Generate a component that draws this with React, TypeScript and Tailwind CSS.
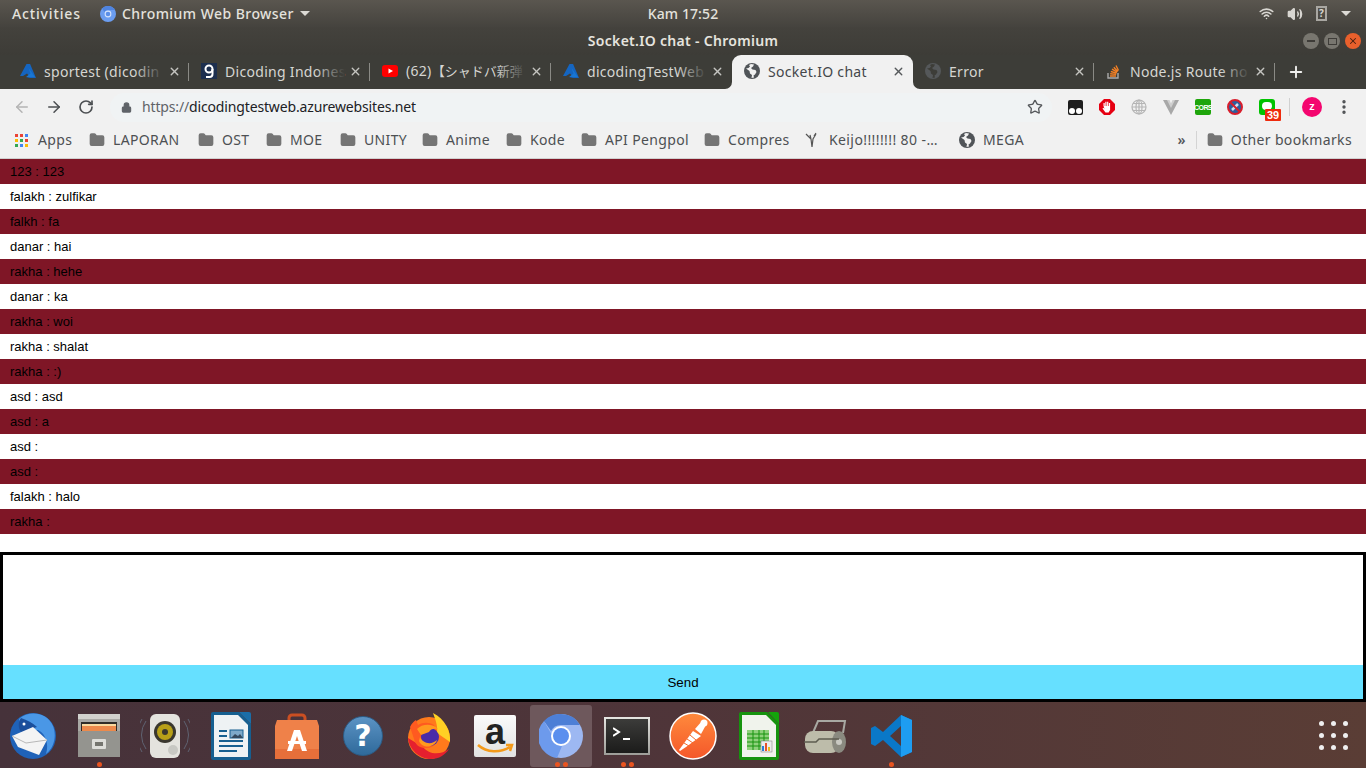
import React from 'react';
import { ArrowLeft, ArrowRight, RotateCw, Lock, Star, X, Plus, MoreVertical, Wifi, Volume2, Folder } from 'lucide-react';

const uiFont = '[font-family:"Noto_Sans","Open_Sans","Noto_Sans_CJK_JP",sans-serif]';

const messages = [
  '123 : 123', 'falakh : zulfikar', 'falkh : fa', 'danar : hai', 'rakha : hehe',
  'danar : ka', 'rakha : woi', 'rakha : shalat', 'rakha : :)', 'asd : asd',
  'asd : a', 'asd :', 'asd :', 'falakh : halo', 'rakha :',
];

const AzureIcon = () => (
  <svg width="16" height="14" viewBox="0 0 16 14"><path d="M6.500 0h3.600L16 14H6l4-1-3-3.500L3 12H0z" fill="#1565c0" /><path d="M8.500 4l2 5.500L6 13h9z" fill="#1976d2" /></svg>
);
const DicodingIcon = () => (
  <div className="w-4 h-[16px] bg-[#1d2f4f] flex items-center justify-center">
    <svg width="10" height="14" viewBox="0 0 10 14" fill="none" stroke="#fff" strokeWidth="2"><circle cx="5" cy="5" r="3.500" /><path d="M8.500 5v5a3 3 0 0 1-3 3H2" /></svg>
  </div>
);
const YoutubeIcon = () => (
  <svg width="16" height="12" viewBox="0 0 16 12"><rect width="16" height="12" rx="3" fill="#f00" /><path d="M6.500 3.500v5L11 6z" fill="#fff" /></svg>
);
const StackIcon = () => (
  <svg width="14" height="16" viewBox="0 0 14 16" fill="none" strokeWidth="1.400"><path d="M1 10v5h10v-5" stroke="#aaa" /><path d="M3 13h6M3.200 10.800l6 .6M3.800 8.500l5.800 1.600M5 6.200l5.200 3M6.800 4.300l4 4.300M9 2.500l2.500 5" stroke="#f48024" /></svg>
);
// chrome's default favicon: solid globe with light continents
const GlobeSolid = ({ color = '#505458', land = '#f1f1f1' }: { color?: string; land?: string }) => (
  <svg width="16" height="16" viewBox="0 0 16 16" className="shrink-0">
    <circle cx="8" cy="8" r="8" fill={color} />
    <path d="M2 5.500l2.500-.5L6 3.500 5 2 7 1l3 .5-1 2-2 1.500 1.500 1.500 3 .5 1 2-1.500 2.500-1.500 1 .5 2-2.500.5.500-3-2-1.500-.5-2.500z" fill={land} />
  </svg>
);

const tabs = [
  { title: 'sportest (dicodin', icon: <AzureIcon />, fade: true },
  { title: 'Dicoding Indones', icon: <DicodingIcon />, fade: true },
  { title: '(62)', rest: '【シャドバ新弾', icon: <YoutubeIcon />, fade: true },
  { title: 'dicodingTestWeb', icon: <AzureIcon />, fade: true },
  { title: 'Socket.IO chat', icon: <GlobeSolid />, active: true },
  { title: 'Error', icon: <GlobeSolid color="#55585a" land="#3d3d38" /> },
  { title: 'Node.js Route no', icon: <StackIcon />, fade: true },
];

const bookmarks = [
  { label: 'LAPORAN', w: 'w-[109px]' },
  { label: 'OST', w: 'w-[68px]' },
  { label: 'MOE', w: 'w-[74px]' },
  { label: 'UNITY', w: 'w-[82px]' },
  { label: 'Anime', w: 'w-[84px]' },
  { label: 'Kode', w: 'w-[75px]' },
  { label: 'API Pengpol', w: 'w-[123px]' },
  { label: 'Compres', w: 'w-[100px]' },
];

const FolderIcon = () => <Folder size={16} fill="#757575" stroke="#757575" className="shrink-0" />;

const AppsIcon = () => (
  <svg width="13" height="13" viewBox="0 0 13 13" className="shrink-0">
    {[0, 1, 2].map(r => [0, 1, 2].map(c => (
      <rect key={`${r}${c}`} x={c * 5} y={r * 5} width="3" height="3"
        fill={[['#ea4335', '#ea4335', '#4285f4'], ['#fbbc05', '#34a853', '#ea4335'], ['#34a853', '#4285f4', '#fbbc05']][r][c]} />
    )))}
  </svg>
);

const ChromiumSmall = () => (
  <svg width="16" height="16" viewBox="0 0 16 16"><circle cx="8" cy="8" r="8" fill="#6b9df0" /><path d="M8 0a8 8 0 0 1 7 4H8a4 4 0 0 0-3.500 2L2 2.500A8 8 0 0 1 8 0" fill="#4f84e0" /><circle cx="8" cy="8" r="3.400" fill="#d5e3fb" /><circle cx="8" cy="8" r="2.300" fill="#5b8fe8" /></svg>
);

const TopBar = () => (
  <div className={`h-[27px] bg-gradient-to-b from-[#5a564f] to-[#45433e] flex items-center text-[#e4e2dd] text-[14px] font-medium tracking-[0.45px] ${uiFont}`}>
    <div className="flex-1 flex items-center">
      <span className="ml-3 w-[68px] tracking-[0.85px]">Activities</span>
      <div className="ml-[20px] flex items-center gap-[6px]">
        <ChromiumSmall />
        <span>Chromium Web Browser</span>
        <span className="w-0 h-0 border-x-[5px] border-x-transparent border-t-[5px] border-t-[#dcdad5]" />
      </div>
    </div>
    <span className="tracking-[0.1px]">Kam 17:52</span>
    <div className="flex-1 flex items-center justify-end text-[#d8d6d1]">
      <Wifi size={15} strokeWidth={2.500} className="mr-[13px]" />
      <Volume2 size={16} strokeWidth={2} fill="currentColor" className="mr-[13px]" />
      <div className="w-[11px] h-[15px] border-2 border-[#a9a7a2] text-[10px] font-bold leading-[11px] text-center tracking-normal mr-[14px]">?</div>
      <span className="w-0 h-0 border-x-[5px] border-x-transparent border-t-[5px] border-t-[#dcdad5] mr-[15px]" />
    </div>
  </div>
);

const TitleBar = () => (
  <div className={`relative h-[28px] pb-[2px] bg-gradient-to-b from-[#44423d] to-[#3d3c37] flex items-center justify-center text-[#e6e4df] text-[14px] font-semibold tracking-[0.3px] ${uiFont}`}>
    <span>Socket.IO chat - Chromium</span>
    <div className="absolute right-[5px] top-[6px] flex gap-[5px]">
      <div className="w-[16px] h-[16px] rounded-full bg-[#78766f] flex items-center justify-center"><div className="w-[8px] h-[2px] bg-[#3e3c38]" /></div>
      <div className="w-[16px] h-[16px] rounded-full bg-[#78766f] flex items-center justify-center"><div className="w-[9px] h-[7px] border border-[#3e3c38]" /></div>
      <div className="w-[16px] h-[16px] rounded-full bg-[#e9602c] flex items-center justify-center"><X size={10} strokeWidth={2.500} className="text-[#4a2010]" /></div>
    </div>
  </div>
);

const TabStrip = () => (
  <div className={`h-[34px] bg-[#3d3d38] flex items-stretch pl-[8px] ${uiFont}`}>
    {tabs.map((t, i) => {
      const bg = t.active ? 'bg-[#f1f1f1] text-[#44474a] rounded-t-[9px]' : 'text-[#d6d6d2]';
      return (
        <div key={i} className={`relative w-[181px] h-full flex items-center shrink-0 pl-[12px] pb-[2px] text-[14px] ${bg}`}>
          {t.active && (
            <>
              <svg className="absolute -left-[7px] bottom-0" width="7" height="7" viewBox="0 0 7 7"><path d="M7 0v7H0a7 7 0 0 0 7-7" fill="#f1f1f1" /></svg>
              <svg className="absolute -right-[7px] bottom-0" width="7" height="7" viewBox="0 0 7 7"><path d="M0 0v7h7a7 7 0 0 1-7-7" fill="#f1f1f1" /></svg>
            </>
          )}
          <div className="w-[16px] flex justify-center shrink-0">{t.icon}</div>
          <div className="relative ml-[8px] w-[120px] whitespace-nowrap tracking-[0.3px]">
            {t.title}
            {t.rest && <span className="text-[13px] tracking-normal">{t.rest}</span>}
            {t.fade && <div className="absolute right-0 top-0 h-full w-[30px] bg-gradient-to-r from-transparent to-[#3d3d38]" />}
          </div>
          <X size={13} strokeWidth={2.500} className={`absolute right-[8px] ${t.active ? 'text-[#55585b]' : 'text-[#c5c5c1]'}`} />
          {!t.active && i !== 3 && <div className="absolute right-0 top-[8px] h-[18px] w-px bg-[#8a8a85]" />}
        </div>
      );
    })}
    <Plus size={18} strokeWidth={2.500} className="text-[#f0f0ee] ml-[14px] self-center -translate-x-[2px]" />
  </div>
);

const ExtSlot = ({ children }: { children: React.ReactNode }) => (
  <div className="relative w-[32px] h-[16px] flex items-center justify-center shrink-0">{children}</div>
);

const Toolbar = () => (
  <div className={`h-[36px] bg-[#f1f1f1] flex items-center text-[#5f6368] ${uiFont}`}>
    <ArrowLeft size={18} strokeWidth={2} className="ml-[13px] text-[#b4b4b4]" />
    <ArrowRight size={18} strokeWidth={2} className="ml-[14px] text-[#4c4f52]" />
    <RotateCw size={16} strokeWidth={2.500} className="ml-[15px] text-[#4c4f52]" />
    <div className="ml-[16px] w-[942px] h-[29px] rounded-full bg-[#f0f3f4] flex items-center pl-[11px] pr-[9px]">
      <Lock size={11} fill="#5f6368" strokeWidth={2.500} className="text-[#5f6368]" />
      <span className="ml-[10px] pb-[2px] text-[14px] tracking-[-0.15px] text-[#5f6368]">https://<span className="text-[#202124]">dicodingtestweb.azurewebsites.net</span></span>
      <Star size={16} strokeWidth={2} className="ml-auto text-[#55585b]" />
    </div>
    <div className="ml-[7px] flex items-center">
      <ExtSlot>
        <div className="w-[15px] h-[15px] rounded-[2px] bg-[#1d1d1d] flex items-end justify-center gap-px pb-[1px]">
          <div className="w-[6px] h-[6px] rounded-full bg-white" /><div className="w-[6px] h-[6px] rounded-full bg-white" />
        </div>
      </ExtSlot>
      <ExtSlot>
        <svg width="16" height="16" viewBox="0 0 16 16"><path d="M5 0h6l5 5v6l-5 5H5l-5-5V5z" fill="#e60012" /><path d="M4.500 7V4h1.200v3h.6V2.800h1.200V7h.6V2.800h1.200V7h.6V4h1.200v7l-1.500 2.500H6.500L3.500 9.500l.8-.8 1.200 1z" fill="#fff" /></svg>
      </ExtSlot>
      <ExtSlot>
        <svg width="16" height="16" viewBox="0 0 16 16" fill="none" stroke="#b5b5b5" strokeWidth="1.200"><circle cx="8" cy="8" r="7" /><ellipse cx="8" cy="8" rx="3" ry="7" /><path d="M1 8h14M2 4.500h12M2 11.500h12M8 1v14" /></svg>
      </ExtSlot>
      <ExtSlot>
        <svg width="16" height="15" viewBox="0 0 16 15"><path d="M0 0h5.500L8 5l2.500-5H16L8 15z" fill="#a8a8a8" /><path d="M4 0h2.500L8 3.500 9.500 0H12L8 8z" fill="#cfcfcf" /></svg>
      </ExtSlot>
      <ExtSlot>
        <div className="w-[16px] h-[16px] rounded-[2px] bg-[#1ea50b] flex items-center justify-center text-white text-[7px] font-bold leading-none tracking-[-0.6px] [font-family:'Liberation_Sans',sans-serif]">CORS</div>
      </ExtSlot>
      <ExtSlot>
        <svg width="16" height="16" viewBox="0 0 16 16"><circle cx="8" cy="8" r="7" fill="#2c5f9e" stroke="#d81e2c" strokeWidth="2" /><path d="M5 11l6-6" stroke="#cfe0f2" strokeWidth="2.500" /><path d="M3 3l10 10" stroke="#d81e2c" strokeWidth="2" /></svg>
      </ExtSlot>
      <ExtSlot>
        <div className="w-[16px] h-[16px] rounded-[3px] bg-[#00c300] flex items-start justify-center pt-[3px]">
          <div className="w-[10px] h-[8px] rounded-full bg-white" />
        </div>
        <div className="absolute left-[14px] top-[10px] w-[16px] h-[12px] bg-[#ee2b0e] text-white text-[11px] font-bold leading-[12px] text-center rounded-[1px] [font-family:'Liberation_Sans',sans-serif]">39</div>
      </ExtSlot>
    </div>
    <div className="ml-[6px] w-px h-[18px] bg-[#d0d0d0]" />
    <div className="ml-[12px] w-[20px] h-[20px] rounded-full bg-[#f4066f] text-white text-[11px] font-semibold flex items-center justify-center pb-[1px]">z</div>
    <MoreVertical size={18} strokeWidth={2.500} className="ml-[13px] text-[#4c4f52]" />
  </div>
);

const BookmarkBar = () => (
  <div className={`h-[34px] pb-[3px] bg-[#f1f1f1] border-b border-[#d0d0d0] flex items-center text-[14px] tracking-[0.35px] text-[#4d5053] ${uiFont}`}>
    <div className="ml-[15px] w-[74px] flex items-center gap-[10px]"><AppsIcon /><span className="pb-[2px]">Apps</span></div>
    {bookmarks.map(b => (
      <div key={b.label} className={`${b.w} flex items-center gap-[8px] shrink-0`}><FolderIcon /><span className="pb-[2px]">{b.label}</span></div>
    ))}
    <div className="ml-[1px] w-[154px] flex items-center gap-[10px] whitespace-nowrap shrink-0">
      <svg width="14" height="16" viewBox="0 0 14 16" fill="none" stroke="#555" strokeWidth="1.200" className="shrink-0"><path d="M1 2l5 5 1 8 1-8 3-5M6 7l-1-4M9 4l2-3" /></svg>
      <span className="pb-[2px] tracking-[0.4px]">Keijo!!!!!!!! 80 -…</span>
    </div>
    <div className="flex items-center gap-[8px]"><GlobeSolid /><span className="pb-[2px]">MEGA</span></div>
    <span className="ml-auto pb-[2px] text-[14px] font-semibold text-[#55585b]">»</span>
    <div className="ml-[10px] w-px h-[18px] bg-[#d4d4d4]" />
    <div className="ml-[10px] mr-[14px] flex items-center gap-[8px]"><FolderIcon /><span className="pb-[2px]">Other bookmarks</span></div>
  </div>
);

const ThunderbirdIcon = () => (
  <svg width="48" height="48" viewBox="0 0 48 48"><circle cx="24" cy="24" r="23" fill="#1f62b8" /><path d="M10 7C20-2 38 0 44 14c4 10 1 22-7 28 3-10 0-20-8-24L13 18z" fill="#4a97e6" /><path d="M12 6c6 2 12 5 16 9l-16 5c-3-4-3-10 0-14z" fill="#1b4f9c" /><circle cx="15" cy="12" r="1.500" fill="#fff" /><path d="M3 24l21-9 14 13-8 15L9 35z" fill="#f4f4f4" /><path d="M3 24l14 7 21-3" fill="none" stroke="#b8b8b8" strokeWidth="1" /></svg>
);
const FilesIcon = () => (
  <svg width="44" height="46" viewBox="0 0 44 46"><rect x="1" y="1" width="42" height="43" rx="2" fill="#a9a9a5" /><rect x="1" y="1" width="42" height="5" fill="#d2d2ce" /><rect x="4" y="9" width="36" height="9" fill="#2f2c28" /><rect x="5" y="11" width="34" height="3" fill="#f7d9a0" /><rect x="5" y="13" width="34" height="5" fill="#ec8a4c" /><rect x="1" y="18" width="42" height="26" fill="#94948f" /><rect x="15" y="26" width="14" height="10" rx="1" fill="#dededa" /><rect x="18" y="29" width="8" height="4" fill="#75756f" /></svg>
);
const RhythmboxIcon = () => (
  <svg width="50" height="46" viewBox="0 0 50 46"><g fill="none" stroke="#5f6372" strokeWidth="1"><path d="M6 8a24 24 0 0 0 0 28M2 6a28 28 0 0 0 0 33M44 8a24 24 0 0 1 0 28M48 6a28 28 0 0 1 0 33" /></g><rect x="10" y="1" width="30" height="44" rx="6" fill="#e4e3de" /><circle cx="25" cy="19" r="11" fill="#3a372e" /><circle cx="25" cy="19" r="8" fill="#b8a018" /><circle cx="25" cy="19" r="3" fill="#3a372e" /><circle cx="33" cy="37" r="5" fill="#c8c8c3" /></svg>
);
const WriterIcon = () => (
  <svg width="40" height="48" viewBox="0 0 40 48"><path d="M0 2a2 2 0 0 1 2-2h26l12 12v34a2 2 0 0 1-2 2H2a2 2 0 0 1-2-2z" fill="#165f90" /><path d="M3 3h24l10 10v32H3z" fill="#eef2f4" /><path d="M28 0h10a2 2 0 0 1 2 2v10z" fill="#1a6ea8" /><path d="M8 18h8v2H8zM8 23h8v2H8zM8 28h24v2H8zM8 33h24v2H8zM8 38h18v2H8z" fill="#165f90" /><rect x="19" y="18" width="13" height="8" fill="#7ea9c9" stroke="#165f90" /><path d="M20 26l4-4 3 2 2-2 3 4z" fill="#34495e" /></svg>
);
const SoftwareIcon = () => (
  <svg width="44" height="46" viewBox="0 0 44 46" fill="none"><path d="M14 12V5a3 3 0 0 1 3-3h10a3 3 0 0 1 3 3v7" stroke="#cb4f22" strokeWidth="3" /><path d="M2 7h40l2 6v33H0V13z" fill="#ef8149" /><path d="M0 36h44v10H0z" fill="#e66f3a" /><path d="M19 17h6l7 21h-5l-5-15-5 15h-5z" fill="#fff" /><rect x="13" y="28" width="18" height="3" fill="#fff" /></svg>
);
const HelpIcon = () => (
  <div className="w-[40px] h-[40px] rounded-full bg-gradient-to-b from-[#5b93c4] to-[#2f6a9b] border border-[#2c5c86] flex items-center justify-center text-white text-[30px] font-bold leading-none [font-family:'DejaVu_Sans',sans-serif]">?</div>
);
const FirefoxIcon = () => (
  <svg width="44" height="46" viewBox="0 0 44 46"><circle cx="22" cy="25" r="21" fill="#ff7a1c" /><path d="M26 0c12 6 18 18 17 29L30 20c1-8-2-14-4-20z" fill="#ffd024" /><path d="M1 25C2 36 12 46 24 46c8 0 14-4 18-10-8 6-20 6-26-2z" fill="#e5202e" /><path d="M3 14c2-4 4-6 6-7l2 5c5-3 11-3 16 0l3 8c3 8-3 16-12 15-6 0-10-4-11-9z" fill="#ff5a20" /><circle cx="23" cy="24" r="9" fill="#4a2ca8" /><path d="M10 16c5-5 15-6 21 0-4-1-8 0-9 3l-8 3z" fill="#ff9a1e" /><path d="M13 24c3 7 12 8 17 3-2 7-14 10-18 1z" fill="#ff9a1e" /></svg>
);
const AmazonIcon = () => (
  <div className="relative w-[42px] h-[42px] rounded-[2px] bg-gradient-to-b from-[#fafafa] to-[#e2e2e2] flex justify-center [font-family:'Liberation_Sans',sans-serif] text-[#222] text-[36px] font-bold leading-[34px]">
    a
    <svg className="absolute left-[2px] bottom-[2px]" width="38" height="12" viewBox="0 0 38 12" fill="none"><path d="M2 2c9 8 22 8 32 2M30 2h6l-2 6" stroke="#f49a1a" strokeWidth="2.500" /></svg>
  </div>
);
const ChromiumIcon = () => (
  <svg width="44" height="44" viewBox="0 0 44 44"><circle cx="22" cy="22" r="22" fill="#9db8f2" /><path d="M22 0a22 22 0 0 1 19 11H22a11 11 0 0 0-10 6L5 7A22 22 0 0 1 22 0" fill="#4d7fd6" /><path d="M5 7l9 16a10 10 0 0 0 9 9l-5 12A22 22 0 0 1 5 7" fill="#6d9aec" /><circle cx="22" cy="22" r="10" fill="#fff" /><circle cx="22" cy="22" r="8" fill="#5b8fee" /></svg>
);
const TerminalIcon = () => (
  <div className="w-[46px] h-[38px] bg-gradient-to-b from-[#e6e6e2] to-[#9d9d98] p-[2px] flex">
    <div className="flex-1 bg-gradient-to-b from-[#3c3c3a] to-[#1c1c1b] pl-[7px] pt-[8px]">
      <svg width="20" height="16" viewBox="0 0 20 16" fill="none" stroke="#fff" strokeWidth="2"><path d="M0 1l6 4-6 4" /><path d="M10 12h7" /></svg>
    </div>
  </div>
);
const PostmanIcon = () => (
  <svg width="48" height="48" viewBox="0 0 48 48"><defs><linearGradient id="pm" x1="0" y1="0" x2="0" y2="1"><stop offset="0" stopColor="#ff8a3c" /><stop offset="1" stopColor="#f4572a" /></linearGradient></defs><circle cx="24" cy="24" r="23" fill="url(#pm)" stroke="#fff" strokeWidth="1.500" /><path d="M10 38l14-19 8 5-15 11-6 4z" fill="#fff" /><path d="M26 17l7-8 4 4-5 9z" fill="#fff" /><circle cx="35" cy="11" r="3.500" fill="#fff" /><path d="M21 23l6 5M18 27l6 4M15 31l5 3" stroke="#f4692e" strokeWidth="1" /></svg>
);
const CalcIcon = () => (
  <svg width="40" height="48" viewBox="0 0 40 48"><path d="M0 2a2 2 0 0 1 2-2h26l12 12v34a2 2 0 0 1-2 2H2a2 2 0 0 1-2-2z" fill="#16930e" /><path d="M3 3h24l10 10v32H3z" fill="#f0f3ec" /><path d="M29 0h9a2 2 0 0 1 2 2v10z" fill="#14a30b" /><rect x="8" y="18" width="22" height="20" fill="#8fd17c" /><path d="M8 22h22M8 26h22M8 30h22M8 34h22M14 18v20M20 18v20M25 18v20" stroke="#16930e" strokeWidth="1" /><rect x="22" y="29" width="11" height="11" fill="#ececec" stroke="#777" strokeWidth=".5" /><rect x="23" y="34" width="2" height="5" fill="#2a7cd8" /><rect x="26" y="31" width="2" height="8" fill="#e8502a" /><rect x="29" y="35" width="2" height="4" fill="#eeb920" /></svg>
);
const BleachIcon = () => (
  <svg width="44" height="36" viewBox="0 0 44 36"><path d="M9 17L15 3h22l5 0-2 12" fill="none" stroke="#a8a8a2" strokeWidth="2" /><rect x="2" y="13" width="34" height="22" rx="8" fill="#bdbcaa" /><ellipse cx="36" cy="24" rx="7" ry="11" fill="#8a8a80" /><circle cx="36" cy="24" r="3" fill="#c9c9c2" /><path d="M1 24h12l3-3h20" stroke="#5d5c50" strokeWidth="1.500" fill="none" /></svg>
);
const VSCodeIcon = () => (
  <svg width="42" height="42" viewBox="0 0 42 42"><path fillRule="evenodd" d="M31 0l11 5v32l-11 5-18-17-8 6-4-2V13l4-2 8 6zM31 11L20 21l11 10z" fill="#0a78c8" /><path d="M31 0l11 5v32l-11 5z" fill="#1e9df1" /></svg>
);

const Dot = () => <span className="w-[5px] h-[5px] rounded-full bg-[#e95420]" />;

const dockItems: { icon: React.ReactNode; dots: number; active?: boolean }[] = [
  { icon: <ThunderbirdIcon />, dots: 0 },
  { icon: <FilesIcon />, dots: 1 },
  { icon: <RhythmboxIcon />, dots: 0 },
  { icon: <WriterIcon />, dots: 0 },
  { icon: <SoftwareIcon />, dots: 0 },
  { icon: <HelpIcon />, dots: 0 },
  { icon: <FirefoxIcon />, dots: 0 },
  { icon: <AmazonIcon />, dots: 0 },
  { icon: <ChromiumIcon />, dots: 2, active: true },
  { icon: <TerminalIcon />, dots: 2 },
  { icon: <PostmanIcon />, dots: 0 },
  { icon: <CalcIcon />, dots: 0 },
  { icon: <BleachIcon />, dots: 0 },
  { icon: <VSCodeIcon />, dots: 1 },
];

const Dock = () => (
  <div className="h-[66px] bg-gradient-to-r from-[#46323a] via-[#4f3539] to-[#5a3d35] flex items-start">
    {dockItems.map((d, i) => (
      <div key={i} className="w-[66px] h-[62px] mt-[3px] shrink-0 flex justify-center">
        <div className={`relative w-[62px] h-full flex items-center justify-center rounded-[3px] ${d.active ? 'bg-[#6e585c]' : ''}`}>
          {d.icon}
          <div className="absolute bottom-0 left-0 right-0 flex justify-center gap-[3px]">
            {Array.from({ length: d.dots }).map((_, k) => <Dot key={k} />)}
          </div>
        </div>
      </div>
    ))}
    <div className="ml-auto mr-[18px] mt-[19px] grid grid-cols-3 gap-x-[7px] gap-y-[7px]">
      {Array.from({ length: 9 }).map((_, i) => <span key={i} className="w-[5px] h-[5px] rounded-full bg-[#efefef]" />)}
    </div>
  </div>
);

export default function App() {
  return (
    <div className="w-[1366px] h-[768px] overflow-hidden flex flex-col bg-white">
      <TopBar />
      <TitleBar />
      <TabStrip />
      <Toolbar />
      <BookmarkBar />
      <main className="flex-1 flex flex-col min-h-0 text-[13px] text-black [font-family:'Liberation_Sans',Arial,sans-serif]">
        <ul className="h-[393px]">
          {messages.map((m, i) => (
            <li key={i} className={`h-[25px] px-[10px] py-[5px] leading-[15px] ${i % 2 === 0 ? 'bg-[#7f1626]' : 'bg-white'}`}>{m}</li>
          ))}
        </ul>
        <form className="h-[150px] border-[3px] border-black flex flex-col">
          <textarea className="flex-1 outline-none resize-none" />
          <button type="button" className="h-[34px] pt-[1px] bg-[#66e0ff] text-[13.333px] text-black">Send</button>
        </form>
      </main>
      <Dock />
    </div>
  );
}
